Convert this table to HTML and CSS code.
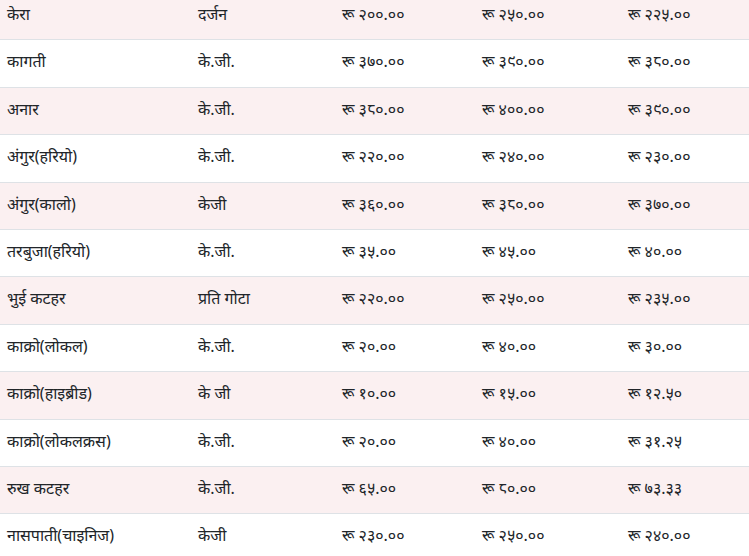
FILE: index.html
```html
<!DOCTYPE html>
<html lang="ne">
<head>
<meta charset="utf-8">
<title>दर</title>
<link rel="stylesheet" href="styles.css">
</head>
<body>
<table class="rates">
  <colgroup>
    <col class="c1"><col class="c2"><col class="c3"><col class="c4"><col class="c5">
  </colgroup>
  <tbody>
    <tr><td>केरा</td><td>दर्जन</td><td>रू २००.००</td><td>रू २५०.००</td><td>रू २२५.००</td></tr>
    <tr><td>कागती</td><td>के.जी.</td><td>रू ३७०.००</td><td>रू ३९०.००</td><td>रू ३८०.००</td></tr>
    <tr><td>अनार</td><td>के.जी.</td><td>रू ३८०.००</td><td>रू ४००.००</td><td>रू ३९०.००</td></tr>
    <tr><td>अंगुर(हरियो)</td><td>के.जी.</td><td>रू २२०.००</td><td>रू २४०.००</td><td>रू २३०.००</td></tr>
    <tr><td>अंगुर(कालो)</td><td>केजी</td><td>रू ३६०.००</td><td>रू ३८०.००</td><td>रू ३७०.००</td></tr>
    <tr><td>तरबुजा(हरियो)</td><td>के.जी.</td><td>रू ३५.००</td><td>रू ४५.००</td><td>रू ४०.००</td></tr>
    <tr><td>भुई कटहर</td><td>प्रति गोटा</td><td>रू २२०.००</td><td>रू २५०.००</td><td>रू २३५.००</td></tr>
    <tr><td>काक्रो(लोकल)</td><td>के.जी.</td><td>रू २०.००</td><td>रू ४०.००</td><td>रू ३०.००</td></tr>
    <tr><td>काक्रो(हाइब्रीड)</td><td>के जी</td><td>रू १०.००</td><td>रू १५.००</td><td>रू १२.५०</td></tr>
    <tr><td>काक्रो(लोकलक्रस)</td><td>के.जी.</td><td>रू २०.००</td><td>रू ४०.००</td><td>रू ३१.२५</td></tr>
    <tr><td>रुख कटहर</td><td>के.जी.</td><td>रू ६५.००</td><td>रू ८०.००</td><td>रू ७३.३३</td></tr>
    <tr><td>नासपाती(चाइनिज)</td><td>केजी</td><td>रू २३०.००</td><td>रू २५०.००</td><td>रू २४०.००</td></tr>
  </tbody>
</table>
</body>
</html>
```
FILE: styles.css
```css
html, body {
  margin: 0;
  padding: 0;
  background: #ffffff;
}
body {
  font-family: "Noto Sans", "Noto Sans Devanagari", sans-serif;
  font-size: 16px;
  color: #212529;
}
.rates {
  width: 100%;
  border-collapse: collapse;
  table-layout: fixed;
  margin-top: -8px;
}
.c1 { width: 191px; }
.c2 { width: 144px; }
.c3 { width: 140px; }
.c4 { width: 146px; }
.c5 { width: auto; }
.rates td {
  padding: 10px 7px 14px;
  line-height: 22.4px;
  border-top: 1px solid #dee2e6;
  vertical-align: top;
  white-space: nowrap;
}
.rates tr:nth-child(odd) td {
  background: #fbf0f1;
}
```
